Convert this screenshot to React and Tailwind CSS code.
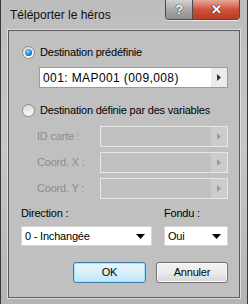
import React from "react";

const font = { fontFamily: '"Liberation Sans", Arial, sans-serif' };

function Radio({ checked }) {
  return (
    <span className="w-[13px] h-[13px] rounded-full border border-[#8a8a8a] bg-gradient-to-b from-[#dcdcdc] to-[#fbfbfb] flex items-center justify-center shrink-0">
      {checked && (
        <span className="w-[7px] h-[7px] rounded-full bg-[radial-gradient(circle_at_40%_35%,#8fdcff,#1a77b8_60%,#0d3f6b)]" />
      )}
    </span>
  );
}

function ArrowRight({ color }) {
  return (
    <svg width="4" height="7" viewBox="0 0 4 7">
      <path d="M0 0 L4 3.5 L0 7 Z" fill={color} />
    </svg>
  );
}

function ArrowDown() {
  return (
    <svg width="9" height="5" viewBox="0 0 9 5">
      <path d="M0 0 H9 L4.5 5 Z" fill="#000" />
    </svg>
  );
}

function VarField({ label }) {
  return (
    <div className="flex items-center h-[21px]">
      <span className="w-[63px] text-[#8c8c8c] whitespace-nowrap">{label}</span>
      <div className="flex-1 h-[21px] border border-[#e6e6e6] bg-[#c0c0c0] flex justify-end">
        <div className="w-[16px] bg-[#cccccc] flex items-center justify-center">
          <ArrowRight color="#9a9a9a" />
        </div>
      </div>
    </div>
  );
}

export default function App() {
  return (
    <div
      className="w-[248px] h-[304px] relative overflow-hidden text-[11px] tracking-[-0.2px] text-black bg-gradient-to-b from-[#bdbdbd] via-[#c6c6c6] to-[#b4b4b4] border-x border-[#3a3a3a]"
      style={font}
    >
      {/* title bar */}
      <div className="h-[30px] flex items-start justify-between pl-[9px] pr-[7px]">
        <span className="mt-[6px] text-[12px] tracking-normal text-[#101010]">Téléporter le héros</span>
        <div className="flex h-[20px] rounded-b-[4px] border border-t-0 border-[#4a4a4a] overflow-hidden shadow-[0_1px_0_#e8e8e8]">
          <div className="w-[27px] bg-gradient-to-b from-[#d2d2d2] via-[#a8a8a8] to-[#8f8f8f] border-r border-[#4a4a4a] flex items-center justify-center">
            <span className="text-white font-bold text-[13px] [text-shadow:0_0_1px_#222,0_0_1px_#222]">?</span>
          </div>
          <div className="w-[46px] bg-gradient-to-b from-[#e7a79a] via-[#d0513c] to-[#b93a22] flex items-center justify-center">
            <span className="text-white font-bold text-[13px] [text-shadow:0_0_1px_#222,0_0_1px_#222]">✕</span>
          </div>
        </div>
      </div>

      {/* client area */}
      <div className="mx-[7px] h-[268px] border border-[#5c5c5c] shadow-[0_0_0_1px_#dcdcdc] bg-[#c0c0c0] pl-[13px] pr-[11px]">
        <div className="flex items-center gap-[5px] mt-[14px] h-[14px] whitespace-nowrap">
          <Radio checked />
          <span>Destination prédéfinie</span>
        </div>
        <div className="ml-[17px] mt-[8px] h-[21px] border border-[#9c9c9c] bg-white flex items-center">
          <span className="flex-1 pl-[3px] text-[12px] tracking-[0.4px] whitespace-nowrap">001: MAP001 (009,008)</span>
          <div className="w-[16px] h-full bg-[#ececec] flex items-center justify-center">
            <ArrowRight color="#333" />
          </div>
        </div>
        <div className="flex items-center gap-[5px] mt-[15px] h-[14px] whitespace-nowrap">
          <Radio />
          <span>Destination définie par des variables</span>
        </div>
        <div className="ml-[15px] mt-[9px] flex flex-col gap-[5px]">
          <VarField label="ID carte :" />
          <VarField label="Coord. X :" />
          <VarField label="Coord. Y :" />
        </div>

        <div className="flex mt-[7px] gap-[12px] -ml-[1px]">
          <div className="w-[131px]">
            <div className="h-[14px] leading-[14px]">Direction :</div>
            <div className="mt-[6px] h-[20px] bg-white border border-[#d6d6d6] flex items-center justify-between pl-[3px] pr-[6px]">
              <span>0 - Inchangée</span>
              <ArrowDown />
            </div>
          </div>
          <div className="flex-1">
            <div className="h-[14px] leading-[14px]">Fondu :</div>
            <div className="mt-[6px] h-[20px] bg-white border border-[#d6d6d6] flex items-center justify-between pl-[3px] pr-[6px]">
              <span>Oui</span>
              <ArrowDown />
            </div>
          </div>
        </div>

        <div className="flex justify-end gap-[10px] mt-[16px]">
          <button className="w-[73px] h-[21px] rounded-[3px] border border-[#3c7fb1] bg-gradient-to-b from-[#eaf6fd] via-[#d9f0fc] to-[#bee6fd] shadow-[inset_0_0_0_1px_#9fe0ff] text-[11px]">
            OK
          </button>
          <button className="w-[72px] h-[21px] rounded-[3px] border border-[#707070] bg-gradient-to-b from-[#f2f2f2] via-[#ebebeb] to-[#d6d6d6] shadow-[inset_0_0_0_1px_#fcfcfc] text-[11px]">
            Annuler
          </button>
        </div>
      </div>
    </div>
  );
}
